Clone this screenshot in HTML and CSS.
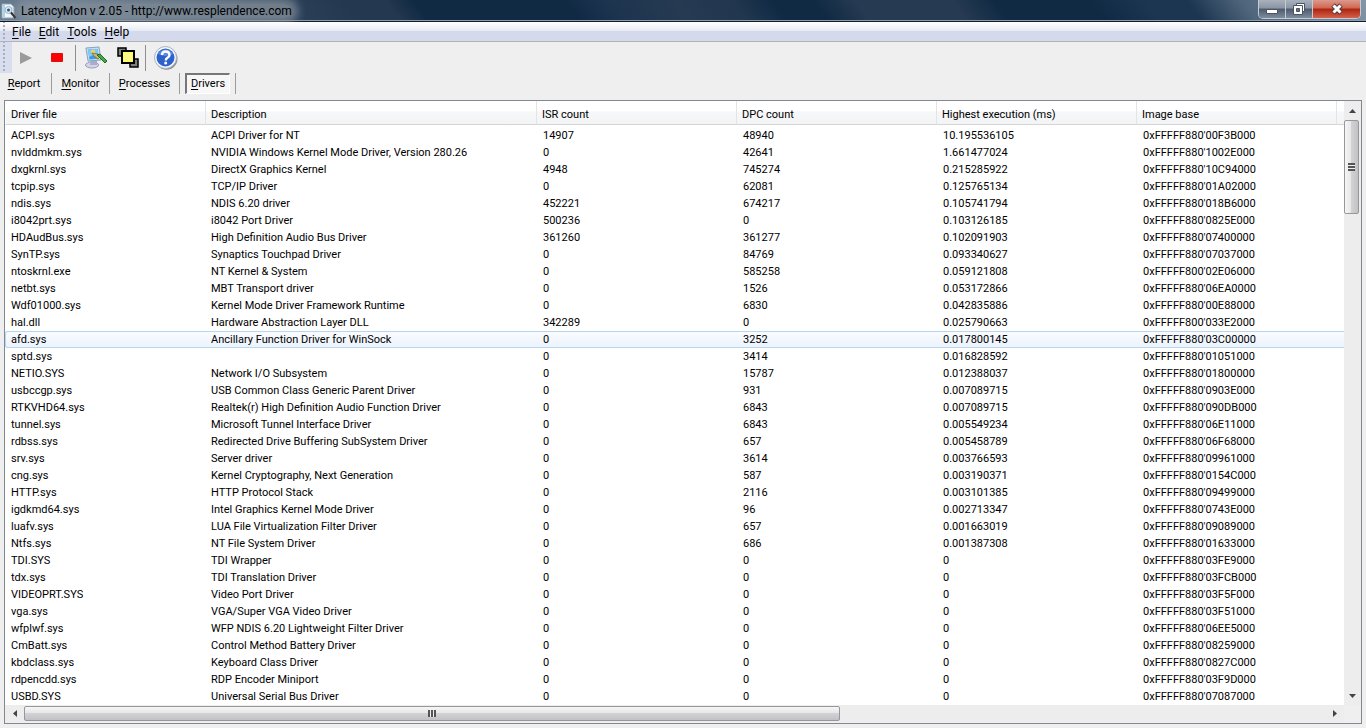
FILE: index.html
```html
<!DOCTYPE html>
<html lang="en">
<head>
  <meta charset="UTF-8" />
  <meta name="viewport" content="width=device-width, initial-scale=1.0"/>
  <title>LatencyMon v 2.05</title>
  <link rel="stylesheet" href="styles.css">
</head>
<body>
  <div class="app">
    <header class="titlebar">
      <svg class="app-icon" width="16" height="18" viewBox="0 0 16 18">
        <path d="M1 2h9l3 3v11H1z" fill="#f4f8fb" stroke="#8fa5b5"/>
        <path d="M2 3h2v12H2z" fill="#a9d4ea"/>
        <circle cx="7.500" cy="8" r="3.500" fill="#dcecf5" stroke="#9cb6c6"/>
        <circle cx="7.500" cy="8" r="1.500" fill="#22588c"/>
        <path d="M10 10.500l4.500 5.500" stroke="#222" stroke-width="2"/>
      </svg>
      <h1><span>LatencyMon v 2.05 - http://www.resplendence.com</span></h1>
      <div class="window-buttons">
        <button class="win-min" aria-label="Minimize">
          <svg width="14" height="14" viewBox="0 0 14 14"><path d="M1.500 7.500h11v4h-11z" fill="#fff" stroke="#4a5463"/></svg>
        </button>
        <button class="win-max" aria-label="Restore">
          <svg width="14" height="14" viewBox="0 0 14 14">
            <path d="M4.500 1.500h8v8h-8z" fill="#fff" stroke="#4a5463"/>
            <path d="M1.500 3.500h9v9h-9z" fill="#fff" stroke="#4a5463"/>
            <path d="M4.500 6.500h3v3h-3z" fill="#67717f" stroke="#4a5463"/>
          </svg>
        </button>
        <button class="win-close" aria-label="Close">
          <svg width="14" height="14" viewBox="0 0 14 14">
            <path d="M3 3l8 8M11 3l-8 8" stroke="#5a3a3a" stroke-width="5"/>
            <path d="M3.500 3.500l7 7M10.500 3.500l-7 7" stroke="#fff" stroke-width="3"/>
          </svg>
        </button>
      </div>
    </header>

    <nav class="menubar">
      <span class="grip"></span>
      <button><u>F</u>ile</button>
      <button><u>E</u>dit</button>
      <button><u>T</u>ools</button>
      <button><u>H</u>elp</button>
    </nav>

    <div class="toolbar">
      <span class="grip"></span>
      <button aria-label="Start">
        <svg width="24" height="24" viewBox="0 0 24 24"><path d="M6 6l12 6-12 6z" fill="#9b9b9b"/></svg>
      </button>
      <button aria-label="Stop">
        <svg width="24" height="24" viewBox="0 0 24 24"><path d="M6.500 7.500h11v8h-11z" fill="#f00" stroke="#d11"/></svg>
      </button>
      <span class="sep"></span>
      <button aria-label="Options">
        <svg width="24" height="24" viewBox="0 0 24 24">
          <ellipse cx="8" cy="19" rx="6.500" ry="3" fill="#d3d5e6" stroke="#9a9dba"/>
          <path d="M7 14l6 1v4H6z" fill="#a9acca"/>
          <path d="M2 2l13-1 2 13-13 1z" fill="#c8dcec" stroke="#7fa6c4"/>
          <path d="M4 3.500l9.500-.5 1.500 9.500-9.500 1z" fill="#369be8"/>
          <path d="M4 3.500l9.500-.5.5 4-9 4z" fill="#7fc9fa"/>
          <circle cx="9" cy="5.500" r="2" fill="#f2d35b"/>
          <path d="M8 7l5 1 3 3-2 2-4-3z" fill="#e3b95f" stroke="#795b25" stroke-width=".7"/>
          <path d="M13 9l3-1 7 7-2 2z" fill="#42a842" stroke="#216b27"/>
        </svg>
      </button>
      <button aria-label="Windows">
        <svg width="24" height="24" viewBox="0 0 24 24">
          <path d="M3 2h8v8H3zM15 13h8v8h-8z" fill="#808080" stroke="#000" stroke-width="1.500"/>
          <path d="M7 5h12v12H7z" fill="#ffff4d" stroke="#000" stroke-width="2"/>
          <path d="M9 7h8v8H9z" fill="#fff98c"/>
        </svg>
      </button>
      <span class="sep"></span>
      <button aria-label="Help">
        <svg width="24" height="24" viewBox="0 0 24 24">
          <circle cx="12.500" cy="12.700" r="11" fill="#8b8e93"/>
          <circle cx="11.500" cy="11.500" r="11" fill="#f4f7fc" stroke="#a5b1c4"/>
          <circle cx="11.500" cy="11.500" r="9" fill="#2d62cb"/>
          <path d="M4 8a8.500 8.500 0 0 1 15 0q-7 4-15 0" fill="#5b8ae0"/>
          <path d="M8 9q0-3.500 3.700-3.500T15.500 9q0 1.700-2 2.800-1.700 1-1.700 2.700" fill="none" stroke="#fff" stroke-width="2.400"/>
          <circle cx="11.700" cy="17" r="1.500" fill="#fff"/>
        </svg>
      </button>
    </div>

    <nav class="tabs">
      <button class="tab-report"><u>R</u>eport</button>
      <button class="tab-monitor"><u>M</u>onitor</button>
      <button class="tab-processes"><u>P</u>rocesses</button>
      <button class="tab-drivers"><span><u>D</u>rivers</span></button>
    </nav>

    <main class="list">
      <div class="list-view">
        <table>
          <colgroup>
            <col class="col-file"><col class="col-desc"><col class="col-num"><col class="col-num"><col class="col-num"><col class="col-num"><col>
          </colgroup>
          <thead>
            <tr>
              <th>Driver file</th>
              <th>Description</th>
              <th>ISR count</th>
              <th>DPC count</th>
              <th>Highest execution (ms)</th>
              <th>Image base</th>
              <td></td>
            </tr>
          </thead>
          <tbody id="drivers"></tbody>
        </table>
      </div>
      <div class="scroll-v">
        <button class="arrow" aria-label="Scroll up"><svg width="7" height="4" viewBox="0 0 7 4"><path d="M0 4l3.500-4L7 4z" fill="#444"/></svg></button>
        <div class="thumb"><i></i></div>
        <button class="arrow" aria-label="Scroll down"><svg width="7" height="4" viewBox="0 0 7 4"><path d="M0 0l3.500 4L7 0z" fill="#444"/></svg></button>
      </div>
      <div class="scroll-h">
        <button class="arrow" aria-label="Scroll left"><svg width="4" height="7" viewBox="0 0 4 7"><path d="M4 0L0 3.500 4 7z" fill="#444"/></svg></button>
        <div class="track"><div class="thumb"><i></i></div></div>
        <button class="arrow" aria-label="Scroll right"><svg width="4" height="7" viewBox="0 0 4 7"><path d="M0 0l4 3.500L0 7z" fill="#444"/></svg></button>
      </div>
    </main>
  </div>

  <script>
    const drivers = [
      ["ACPI.sys", "ACPI Driver for NT", "14907", "48940", "10.195536105", "0xFFFFF880'00F3B000"],
      ["nvlddmkm.sys", "NVIDIA Windows Kernel Mode Driver, Version 280.26", "0", "42641", "1.661477024", "0xFFFFF880'1002E000"],
      ["dxgkrnl.sys", "DirectX Graphics Kernel", "4948", "745274", "0.215285922", "0xFFFFF880'10C94000"],
      ["tcpip.sys", "TCP/IP Driver", "0", "62081", "0.125765134", "0xFFFFF880'01A02000"],
      ["ndis.sys", "NDIS 6.20 driver", "452221", "674217", "0.105741794", "0xFFFFF880'018B6000"],
      ["i8042prt.sys", "i8042 Port Driver", "500236", "0", "0.103126185", "0xFFFFF880'0825E000"],
      ["HDAudBus.sys", "High Definition Audio Bus Driver", "361260", "361277", "0.102091903", "0xFFFFF880'07400000"],
      ["SynTP.sys", "Synaptics Touchpad Driver", "0", "84769", "0.093340627", "0xFFFFF880'07037000"],
      ["ntoskrnl.exe", "NT Kernel & System", "0", "585258", "0.059121808", "0xFFFFF800'02E06000"],
      ["netbt.sys", "MBT Transport driver", "0", "1526", "0.053172866", "0xFFFFF880'06EA0000"],
      ["Wdf01000.sys", "Kernel Mode Driver Framework Runtime", "0", "6830", "0.042835886", "0xFFFFF880'00E88000"],
      ["hal.dll", "Hardware Abstraction Layer DLL", "342289", "0", "0.025790663", "0xFFFFF800'033E2000"],
      ["afd.sys", "Ancillary Function Driver for WinSock", "0", "3252", "0.017800145", "0xFFFFF880'03C00000"],
      ["sptd.sys", "", "0", "3414", "0.016828592", "0xFFFFF880'01051000"],
      ["NETIO.SYS", "Network I/O Subsystem", "0", "15787", "0.012388037", "0xFFFFF880'01800000"],
      ["usbccgp.sys", "USB Common Class Generic Parent Driver", "0", "931", "0.007089715", "0xFFFFF880'0903E000"],
      ["RTKVHD64.sys", "Realtek(r) High Definition Audio Function Driver", "0", "6843", "0.007089715", "0xFFFFF880'090DB000"],
      ["tunnel.sys", "Microsoft Tunnel Interface Driver", "0", "6843", "0.005549234", "0xFFFFF880'06E11000"],
      ["rdbss.sys", "Redirected Drive Buffering SubSystem Driver", "0", "657", "0.005458789", "0xFFFFF880'06F68000"],
      ["srv.sys", "Server driver", "0", "3614", "0.003766593", "0xFFFFF880'09961000"],
      ["cng.sys", "Kernel Cryptography, Next Generation", "0", "587", "0.003190371", "0xFFFFF880'0154C000"],
      ["HTTP.sys", "HTTP Protocol Stack", "0", "2116", "0.003101385", "0xFFFFF880'09499000"],
      ["igdkmd64.sys", "Intel Graphics Kernel Mode Driver", "0", "96", "0.002713347", "0xFFFFF880'0743E000"],
      ["luafv.sys", "LUA File Virtualization Filter Driver", "0", "657", "0.001663019", "0xFFFFF880'09089000"],
      ["Ntfs.sys", "NT File System Driver", "0", "686", "0.001387308", "0xFFFFF880'01633000"],
      ["TDI.SYS", "TDI Wrapper", "0", "0", "0", "0xFFFFF880'03FE9000"],
      ["tdx.sys", "TDI Translation Driver", "0", "0", "0", "0xFFFFF880'03FCB000"],
      ["VIDEOPRT.SYS", "Video Port Driver", "0", "0", "0", "0xFFFFF880'03F5F000"],
      ["vga.sys", "VGA/Super VGA Video Driver", "0", "0", "0", "0xFFFFF880'03F51000"],
      ["wfplwf.sys", "WFP NDIS 6.20 Lightweight Filter Driver", "0", "0", "0", "0xFFFFF880'06EE5000"],
      ["CmBatt.sys", "Control Method Battery Driver", "0", "0", "0", "0xFFFFF880'08259000"],
      ["kbdclass.sys", "Keyboard Class Driver", "0", "0", "0", "0xFFFFF880'0827C000"],
      ["rdpencdd.sys", "RDP Encoder Miniport", "0", "0", "0", "0xFFFFF880'03F9D000"],
      ["USBD.SYS", "Universal Serial Bus Driver", "0", "0", "0", "0xFFFFF880'07087000"]
    ];
    const selected = "afd.sys";

    document.getElementById('drivers').innerHTML = drivers.map(row =>
      `<tr${row[0] === selected ? ' class="selected"' : ''}>` +
      row.map(cell => `<td>${cell.replace('&', '&amp;')}</td>`).join('') +
      '<td></td></tr>'
    ).join('');
  </script>
</body>
</html>
```
FILE: styles.css
```css
* {
  box-sizing: border-box;
}
body {
  margin: 0;
  background: #efefef;
  color: #000;
  font-family: Roboto, "Open Sans", sans-serif;
  font-size: 11px;
  line-height: 16px;
}
button {
  margin: 0;
  padding: 0;
  border: none;
  background: none;
  color: inherit;
  font: inherit;
}
svg {
  display: block;
}
u {
  text-underline-offset: 2px;
}
.app {
  display: flex;
  flex-direction: column;
  min-height: 100vh;
  padding-bottom: 4px;
}

/* title bar */
.titlebar {
  display: flex;
  height: 22px;
  padding-right: 5px;
  border-bottom: 1px solid #101c2c;
  box-shadow: inset 0 -1px #8d9bae;
  background: linear-gradient(53deg, #6b7f93 0%, #2b4058 22%, #24384f 26%, #24384f 29%, #112a44 31%, #112a44 42%, #1d344f 45%, #263a52 50%, #21374f 54%, #112a44 57%, #112a44 60%, #263a52 63%, #263a52 70%, #112a44 73%, #112a44 80%, #1c3550 84%, #1c3550 87%, #50667c 91%, #8496a8 100%);
}
.app-icon {
  margin: 2px 4px 0 1px;
}
.titlebar h1 {
  flex: 1;
  margin: 0;
  font-size: 12px;
  font-weight: normal;
  line-height: 22px;
}
.titlebar h1 span {
  border-radius: 8px;
  background: rgba(140, 150, 160, 0.7);
  box-shadow: 0 0 8px 6px rgba(140, 150, 160, 0.7);
}
.window-buttons {
  display: flex;
  height: 19px;
  border: 1px solid #c3ccd6;
  border-top: none;
  border-radius: 0 0 5px 5px;
  overflow: hidden;
}
.window-buttons button {
  display: flex;
  justify-content: center;
  width: 27px;
  padding-top: 2px;
  border-right: 1px solid #c3ccd6;
  background: linear-gradient(#a9b1bd, #8a94a3 45%, #4d5a6d 50%, #7f8c9e);
}
.window-buttons .win-close {
  width: 47px;
  border-right: none;
  background: linear-gradient(#dc9a8c, #cf6650 45%, #ad2410 50%, #d4614a);
}

/* menu and toolbar */
.menubar {
  display: flex;
  height: 20px;
  border-bottom: 1px solid #b0b3ba;
  background: linear-gradient(#fff, #e6eaf4 9px, #d4daec 9px);
  font-size: 12px;
}
.menubar button {
  height: 19px;
  margin-right: 8px;
}
.grip {
  width: 12px;
  background: radial-gradient(circle, #a7adbd 1px, transparent 1px) 2px 2px / 4px 4px repeat-y;
}
.toolbar {
  display: flex;
  align-items: center;
  height: 31px;
}
.toolbar .grip {
  align-self: stretch;
  margin-right: 2px;
  background: radial-gradient(circle, #a7adbd 1px, transparent 1px) 2px 2px / 4px 4px repeat-y, #d8deee;
}
.toolbar button {
  width: 24px;
  margin-right: 7px;
}
.sep {
  width: 1px;
  height: 26px;
  margin: 0 8px 0 -1px;
  background: #8e8e8e;
}
.tabs {
  display: flex;
  height: 27px;
}
.tabs button {
  height: 21px;
  border-right: 1px solid #9c9c9c;
}
.tabs .tab-report {
  width: 52px;
  padding-right: 3px;
}
.tabs .tab-monitor {
  width: 58px;
}
.tabs .tab-processes {
  width: 70px;
}
.tabs .tab-drivers {
  width: 56px;
  padding: 0 5px;
}
.tab-drivers span {
  display: block;
  height: 21px;
  padding-top: 1px;
  border: 1px solid #fff;
  border-top: 2px solid #777;
  border-left: 2px solid #777;
  background: #f7f7f7;
}

/* driver list */
.list {
  flex: 1;
  display: grid;
  grid-template-columns: minmax(0, 1fr) 17px;
  grid-template-rows: 1fr 17px;
  margin: 0 4px;
  padding-bottom: 1px;
  border: 1px solid #828790;
}
.list-view {
  background: #fff;
  overflow: hidden;
}
table {
  width: 100%;
  table-layout: fixed;
  border-spacing: 0;
}
.col-file, .col-num {
  width: 200px;
}
.col-desc {
  width: 331px;
}
th, td {
  padding: 0 0 0 6px;
  text-align: left;
  font-weight: normal;
  white-space: nowrap;
}
th, thead td {
  height: 24px;
  padding: 4px 0 0 5px;
  border-bottom: 1px solid #d5d5d5;
  border-left: 1px solid #e2e4e8;
  background: linear-gradient(#fff 45%, #f6f7f9 46%, #f3f4f6);
}
th:first-child {
  border-left-color: #fff;
}
tbody::before {
  content: "";
  display: block;
  height: 2px;
}
tbody td {
  height: 17px;
  line-height: 17px;
}
tbody td:nth-child(n+3) {
  padding-left: 7px;
}
.selected td {
  background: linear-gradient(#fafcff, #ebf3fd);
  box-shadow: inset 0 1px #b8d6ee, inset 0 -1px #b8d6ee;
}
.selected td:first-child {
  border-radius: 3px 0 0 3px;
  box-shadow: inset 0 1px #b8d6ee, inset 0 -1px #b8d6ee, inset 1px 0 #b8d6ee;
}

/* scroll bars */
.scroll-v, .scroll-h {
  display: flex;
  background: #ededed;
}
.scroll-v {
  flex-direction: column;
}
.scroll-h .track {
  flex: 1;
}
.arrow {
  display: flex;
  align-items: center;
  justify-content: center;
  width: 17px;
  height: 19px;
}
.thumb {
  display: flex;
  align-items: center;
  justify-content: center;
  border: 1px solid #979797;
  border-radius: 2px;
}
.scroll-v .thumb {
  width: 15px;
  height: 94px;
  background: linear-gradient(90deg, #f6f6f6, #e6e6e8 48%, #d2d2d5 50%, #c2c2c6);
}
.scroll-v .thumb i {
  width: 7px;
  height: 8px;
  background: repeating-linear-gradient(#555 0 2px, #eee 2px 3px);
}
.scroll-v .arrow:last-child {
  margin-top: auto;
}
.scroll-h .arrow {
  width: 19px;
  height: 17px;
}
.scroll-h .thumb {
  width: 62.7%;
  height: 15px;
  margin-top: 1px;
  background: linear-gradient(#f6f6f6, #e6e6e8 48%, #d2d2d5 50%, #c2c2c6);
}
.scroll-h .thumb i {
  width: 8px;
  height: 7px;
  background: repeating-linear-gradient(90deg, #555 0 2px, #eee 2px 3px);
}
```
